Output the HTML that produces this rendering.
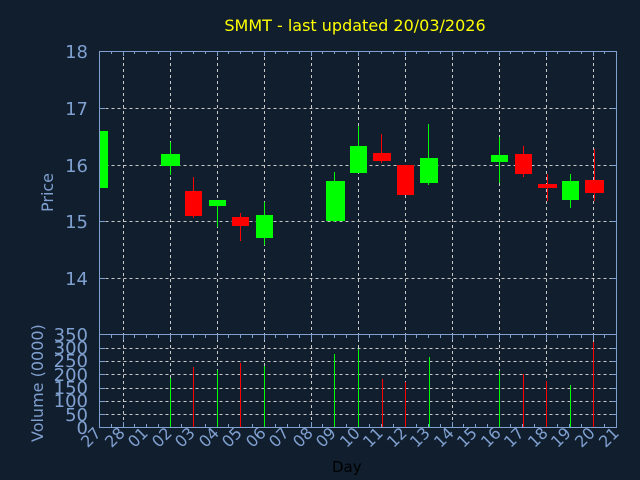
<!DOCTYPE html>
<html><head><meta charset="utf-8"><style>
html,body{margin:0;padding:0;background:#101e2e;}
svg{display:block;font-family:"DejaVu Sans","Liberation Sans",sans-serif;}
</style></head><body>
<svg width="640" height="480" viewBox="0 0 640 480" xmlns="http://www.w3.org/2000/svg">
<rect width="640" height="480" fill="#101e2e"/>
<text x="355" y="31" fill="#ffff00" font-size="16" text-anchor="middle">SMMT - last updated 20/03/2026</text>
<g stroke="#c8c8c8" stroke-width="1" stroke-dasharray="3,3" fill="none">
<path d="M99.5 108.5H617M99.5 165.5H617M99.5 221.5H617M99.5 278.5H617"/>
<path d="M99.5 414.5H617M99.5 401.5H617M99.5 388.5H617M99.5 374.5H617M99.5 361.5H617M99.5 348.5H617"/>
<path d="M123.5 51V427M170.5 51V427M217.5 51V427M264.5 51V427M311.5 51V427M358.5 51V427M405.5 51V427M452.5 51V427M499.5 51V427M546.5 51V427M593.5 51V427"/>
</g>
<g stroke="#80a0d0" stroke-width="1" fill="none">
<rect x="99.5" y="51.5" width="517" height="376"/>
<path d="M99.5 334.5H617"/>
<path d="M99 108.5h6M99 165.5h6M99 221.5h6M99 278.5h6M611 108.5h6M611 165.5h6M611 221.5h6M611 278.5h6"/>
<path d="M99 414.5h6M99 401.5h6M99 388.5h6M99 374.5h6M99 361.5h6M99 348.5h6M611 414.5h6M611 401.5h6M611 388.5h6M611 374.5h6M611 361.5h6M611 348.5h6"/>
</g>
<g stroke="#80a0d0" stroke-width="1">
<path d="M111.5 51v3M134.5 51v3M146.5 51v3M158.5 51v3M181.5 51v3M193.5 51v3M205.5 51v3M228.5 51v3M240.5 51v3M252.5 51v3M275.5 51v3M287.5 51v3M299.5 51v3M322.5 51v3M334.5 51v3M346.5 51v3M369.5 51v3M381.5 51v3M393.5 51v3M416.5 51v3M428.5 51v3M440.5 51v3M463.5 51v3M475.5 51v3M487.5 51v3M510.5 51v3M522.5 51v3M534.5 51v3M557.5 51v3M569.5 51v3M581.5 51v3M604.5 51v3"/>
<path d="M123.5 51v5M170.5 51v5M217.5 51v5M264.5 51v5M311.5 51v5M358.5 51v5M405.5 51v5M452.5 51v5M499.5 51v5M546.5 51v5M593.5 51v5"/>
<path d="M111.5 335v3M134.5 335v3M146.5 335v3M158.5 335v3M181.5 335v3M193.5 335v3M205.5 335v3M228.5 335v3M240.5 335v3M252.5 335v3M275.5 335v3M287.5 335v3M299.5 335v3M322.5 335v3M334.5 335v3M346.5 335v3M369.5 335v3M381.5 335v3M393.5 335v3M416.5 335v3M428.5 335v3M440.5 335v3M463.5 335v3M475.5 335v3M487.5 335v3M510.5 335v3M522.5 335v3M534.5 335v3M557.5 335v3M569.5 335v3M581.5 335v3M604.5 335v3"/>
<path d="M123.5 335v5M170.5 335v5M217.5 335v5M264.5 335v5M311.5 335v5M358.5 335v5M405.5 335v5M452.5 335v5M499.5 335v5M546.5 335v5M593.5 335v5"/>
<path d="M111.5 427v-3M134.5 427v-3M146.5 427v-3M158.5 427v-3M181.5 427v-3M193.5 427v-3M205.5 427v-3M228.5 427v-3M240.5 427v-3M252.5 427v-3M275.5 427v-3M287.5 427v-3M299.5 427v-3M322.5 427v-3M334.5 427v-3M346.5 427v-3M369.5 427v-3M381.5 427v-3M393.5 427v-3M416.5 427v-3M428.5 427v-3M440.5 427v-3M463.5 427v-3M475.5 427v-3M487.5 427v-3M510.5 427v-3M522.5 427v-3M534.5 427v-3M557.5 427v-3M569.5 427v-3M581.5 427v-3M604.5 427v-3"/>
<path d="M123.5 427v-5M170.5 427v-5M217.5 427v-5M264.5 427v-5M311.5 427v-5M358.5 427v-5M405.5 427v-5M452.5 427v-5M499.5 427v-5M546.5 427v-5M593.5 427v-5"/>
</g>
<g stroke-width="1">
<path stroke="#00ff00" d="M170.5 142V175M217.5 200V227M264.5 202V245M334.5 172V222M358.5 126V173M428.5 124V185M499.5 137V183M570.5 174V208"/>
<path stroke="#ff0000" d="M193.5 177V218M240.5 213V241M381.5 134V163M405.5 165V195M523.5 146V177M547.5 174V201M594.5 149V201"/>
</g>
<g fill="#00ff00">
<rect x="100" y="131" width="8" height="57"/>
<rect x="161" y="154" width="19" height="12"/>
<rect x="209" y="200" width="17" height="6"/>
<rect x="256" y="215" width="17" height="23"/>
<rect x="326" y="181" width="19" height="40"/>
<rect x="350" y="146" width="17" height="27"/>
<rect x="420" y="158" width="18" height="25"/>
<rect x="491" y="155" width="17" height="7"/>
<rect x="562" y="181" width="17" height="19"/>
</g>
<g fill="#ff0000">
<rect x="185" y="191" width="17" height="25"/>
<rect x="232" y="217" width="17" height="9"/>
<rect x="373" y="153" width="18" height="8"/>
<rect x="397" y="165" width="17" height="30"/>
<rect x="515" y="154" width="17" height="20"/>
<rect x="538" y="184" width="19" height="4"/>
<rect x="585" y="180" width="19" height="13"/>
</g>
<g stroke-width="1">
<path stroke="#00ff00" d="M170.5 378V427M217.5 370V427M264.5 366V427M334.5 354V427M358.5 349V427M429.5 357V427M499.5 371V427M570.5 385V427"/>
<path stroke="#ff0000" d="M193.5 367V427M240.5 363V427M382.5 379V427M405.5 382V427M523.5 374V427M546.5 381V427M593.5 342V427"/>
</g>
<g fill="#80a0d0" font-size="18" text-anchor="end">
<text x="88" y="58">18</text>
<text x="88" y="115">17</text>
<text x="88" y="172">16</text>
<text x="88" y="228">15</text>
<text x="88" y="285">14</text>
<text x="88" y="341">350</text>
<text x="88" y="354">300</text>
<text x="88" y="367">250</text>
<text x="88" y="381">200</text>
<text x="88" y="394">150</text>
<text x="88" y="407">100</text>
<text x="88" y="421">50</text>
<text x="88" y="434">0</text>
</g>
<text transform="translate(53,212) rotate(-90)" fill="#80a0d0" font-size="16">Price</text>
<text transform="translate(43,442) rotate(-90)" fill="#80a0d0" font-size="16">Volume (0000)</text>
<g fill="#80a0d0" font-size="16" text-anchor="end">
<text transform="translate(102,434) rotate(-45)">27</text>
<text transform="translate(126,434) rotate(-45)">28</text>
<text transform="translate(149,434) rotate(-45)">01</text>
<text transform="translate(173,434) rotate(-45)">02</text>
<text transform="translate(196,434) rotate(-45)">03</text>
<text transform="translate(220,434) rotate(-45)">04</text>
<text transform="translate(243,434) rotate(-45)">05</text>
<text transform="translate(267,434) rotate(-45)">06</text>
<text transform="translate(290,434) rotate(-45)">07</text>
<text transform="translate(314,434) rotate(-45)">08</text>
<text transform="translate(337,434) rotate(-45)">09</text>
<text transform="translate(361,434) rotate(-45)">10</text>
<text transform="translate(384,434) rotate(-45)">11</text>
<text transform="translate(408,434) rotate(-45)">12</text>
<text transform="translate(431,434) rotate(-45)">13</text>
<text transform="translate(455,434) rotate(-45)">14</text>
<text transform="translate(478,434) rotate(-45)">15</text>
<text transform="translate(502,434) rotate(-45)">16</text>
<text transform="translate(525,434) rotate(-45)">17</text>
<text transform="translate(549,434) rotate(-45)">18</text>
<text transform="translate(572,434) rotate(-45)">19</text>
<text transform="translate(596,434) rotate(-45)">20</text>
<text transform="translate(620,434) rotate(-45)">21</text>
</g>
<text x="332" y="472" fill="#000000" font-size="15">Day</text>
</svg>
</body></html>
